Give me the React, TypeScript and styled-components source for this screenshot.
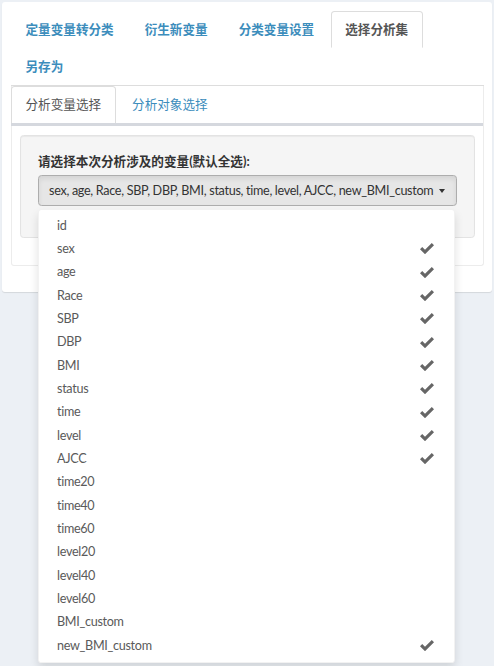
import React from "react";
import styled, { createGlobalStyle } from "styled-components";

const Global = createGlobalStyle`
  html, body { margin: 0; padding: 0; }
  body {
    background: #ecf0f5;
    font-family: "Lato", "Noto Sans CJK SC", sans-serif;
    font-size: 12.6px;
    line-height: 18px;
    color: #333;
  }
  * { box-sizing: border-box; }
`;

const Page = styled.div`
  padding: 2px 2px 0 2px;
  min-height: 666px;
`;

const Box = styled.div`
  background: #fff;
  border-radius: 3px;
  box-shadow: 0 1px 1px rgba(0, 0, 0, 0.1);
  padding: 9px 8px 26px 9px;
`;

const TopNav = styled.ul`
  list-style: none;
  margin: 0;
  padding: 0;
  display: flex;
  flex-wrap: wrap;
  border-bottom: 1px solid #dddddd;
`;

const TopTab = styled.li<{ $active?: boolean }>`
  margin-right: 2px;
  padding: 9px 13.5px;
  height: 37px;
  font-weight: 700;
  white-space: nowrap;
  color: ${(p) => (p.$active ? "#555" : "#3c8dbc")};
  border: 1px solid ${(p) => (p.$active ? "#dddddd" : "transparent")};
  border-bottom-color: transparent;
  border-radius: 3.6px 3.6px 0 0;
  background: #fff;
`;

const Inner = styled.div`
  border: 1px solid #ececec;
  border-top: none;
  border-radius: 0 0 3px 3px;
  padding-bottom: 9px;
`;

const SubNav = styled.ul`
  list-style: none;
  margin: 0 0 0 -1px;
  padding: 0;
  display: flex;
  border-bottom: 3px solid #d5d8de;
`;

const SubTab = styled.li<{ $active?: boolean }>`
  margin-right: 2px;
  padding: 9px 13.5px;
  height: 37px;
  white-space: nowrap;
  color: ${(p) => (p.$active ? "#555" : "#3c8dbc")};
  border: 1px solid ${(p) => (p.$active ? "#dddddd" : "transparent")};
  border-bottom: none;
  border-radius: 3.6px 3.6px 0 0;
`;

const Content = styled.div`
  padding: 9px 8px 0 8px;
`;

const Well = styled.div`
  background: #f5f5f5;
  border: 1px solid #e3e3e3;
  border-radius: 3.6px;
  box-shadow: inset 0 1px 1px rgba(0, 0, 0, 0.05);
  padding: 17px 17px 17px 17px;
  margin-bottom: 18px;
`;

const Label = styled.div`
  font-weight: 700;
  color: #333;
  margin-bottom: 4px;
`;

const Picker = styled.div`
  position: relative;
  margin-bottom: 13.5px;
`;

const SelectButton = styled.div`
  height: 31px;
  display: flex;
  align-items: center;
  justify-content: space-between;
  padding: 0 11px 0 10px;
  background: #e6e6e6;
  border: 1px solid #adadad;
  border-radius: 3.6px;
  box-shadow: inset 0 3px 5px rgba(0, 0, 0, 0.08);
  color: #333;
  white-space: nowrap;
  letter-spacing: -0.3px;
`;

const Caret = styled.span`
  width: 0;
  height: 0;
  border-top: 4px solid #333;
  border-left: 3.5px solid transparent;
  border-right: 3.5px solid transparent;
`;

const Menu = styled.ul`
  position: absolute;
  top: calc(100% + 3px);
  left: 0;
  right: 2px;
  z-index: 10;
  list-style: none;
  margin: 0;
  padding: 4px 0 5px 0;
  background: #fff;
  border: 1px solid rgba(0, 0, 0, 0.05);
  border-radius: 3.6px;
  box-shadow: 0 5px 10px rgba(0, 0, 0, 0.12);
`;

const Item = styled.li`
  height: 23.33px;
  display: flex;
  align-items: center;
  justify-content: space-between;
  padding: 0 20px 0 18px;
  color: #5a5a5a;
  letter-spacing: -0.3px;
`;

const Check = () => (
  <svg width="14" height="11" viewBox="0 0 14 11">
    <path d="M0 6.2 L2.2 4 L5 6.8 L11.8 0 L14 2.2 L5 11.2 Z" fill="#666" />
  </svg>
);

const topTabs = [
  { label: "定量变量转分类" },
  { label: "衍生新变量" },
  { label: "分类变量设置" },
  { label: "选择分析集", active: true },
  { label: "另存为" },
];

const subTabs = [
  { label: "分析变量选择", active: true },
  { label: "分析对象选择" },
];

const items: { name: string; checked: boolean }[] = [
  { name: "id", checked: false },
  { name: "sex", checked: true },
  { name: "age", checked: true },
  { name: "Race", checked: true },
  { name: "SBP", checked: true },
  { name: "DBP", checked: true },
  { name: "BMI", checked: true },
  { name: "status", checked: true },
  { name: "time", checked: true },
  { name: "level", checked: true },
  { name: "AJCC", checked: true },
  { name: "time20", checked: false },
  { name: "time40", checked: false },
  { name: "time60", checked: false },
  { name: "level20", checked: false },
  { name: "level40", checked: false },
  { name: "level60", checked: false },
  { name: "BMI_custom", checked: false },
  { name: "new_BMI_custom", checked: true },
];

export default function App() {
  const selected = items.filter((i) => i.checked).map((i) => i.name).join(", ");
  return (
    <Page>
      <Global />
      <Box>
        <TopNav>
          {topTabs.map((t) => (
            <TopTab key={t.label} $active={t.active}>
              {t.label}
            </TopTab>
          ))}
        </TopNav>
        <Inner>
          <SubNav>
            {subTabs.map((t) => (
              <SubTab key={t.label} $active={t.active}>
                {t.label}
              </SubTab>
            ))}
          </SubNav>
          <Content>
            <Well>
              <Label>请选择本次分析涉及的变量(默认全选):</Label>
              <Picker>
                <SelectButton>
                  <span>{selected}</span>
                  <Caret />
                </SelectButton>
                <Menu>
                  {items.map((i) => (
                    <Item key={i.name}>
                      <span>{i.name}</span>
                      {i.checked && <Check />}
                    </Item>
                  ))}
                </Menu>
              </Picker>
            </Well>
          </Content>
        </Inner>
      </Box>
    </Page>
  );
}
